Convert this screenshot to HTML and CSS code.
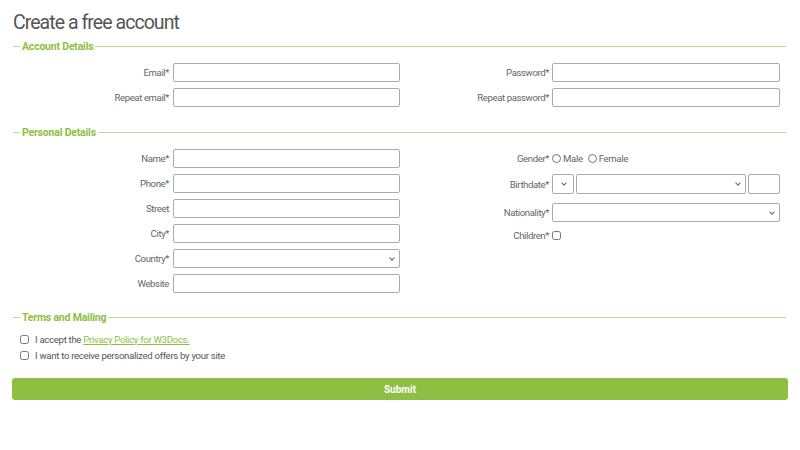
FILE: index.html
```html
<!DOCTYPE html>
<html lang="en">
<head>
<meta charset="utf-8">
<title>Create a free account</title>
<link rel="stylesheet" href="styles.css">
</head>
<body>
<form class="page">
  <h1 class="title">Create a free account</h1>

  <fieldset class="group group-account">
    <legend class="legend">Account Details</legend>
    <div class="cols">
      <div class="col col-left">
        <div class="row"><label class="lbl">Email*</label><input class="field" type="text"></div>
        <div class="row"><label class="lbl">Repeat email*</label><input class="field" type="text"></div>
      </div>
      <div class="col col-right">
        <div class="row"><label class="lbl">Password*</label><input class="field" type="password"></div>
        <div class="row"><label class="lbl">Repeat password*</label><input class="field" type="password"></div>
      </div>
    </div>
  </fieldset>

  <fieldset class="group group-personal">
    <legend class="legend">Personal Details</legend>
    <div class="cols">
      <div class="col col-left">
        <div class="row"><label class="lbl">Name*</label><input class="field" type="text"></div>
        <div class="row"><label class="lbl">Phone*</label><input class="field" type="text"></div>
        <div class="row"><label class="lbl">Street</label><input class="field" type="text"></div>
        <div class="row"><label class="lbl">City*</label><input class="field" type="text"></div>
        <div class="row"><label class="lbl">Country*</label><span class="selwrap w-full"><select class="field sel"><option></option></select></span></div>
        <div class="row"><label class="lbl">Website</label><input class="field" type="text"></div>
      </div>
      <div class="col col-right">
        <div class="row row-gender">
          <label class="lbl">Gender*</label>
          <span class="choices">
            <label class="choice"><input class="radio" type="radio" name="g">Male</label>
            <label class="choice"><input class="radio" type="radio" name="g">Female</label>
          </span>
        </div>
        <div class="row row-birth">
          <label class="lbl">Birthdate*</label>
          <span class="birth">
            <span class="selwrap w-day"><select class="field sel"><option></option></select></span>
            <span class="selwrap w-month"><select class="field sel"><option></option></select></span>
            <input class="field in-year" type="text">
          </span>
        </div>
        <div class="row row-nat"><label class="lbl">Nationality*</label><span class="selwrap w-full"><select class="field sel"><option></option></select></span></div>
        <div class="row row-children"><label class="lbl">Children*</label><input class="check" type="checkbox"></div>
      </div>
    </div>
  </fieldset>

  <fieldset class="group group-terms">
    <legend class="legend">Terms and Mailing</legend>
    <label class="term"><input class="check" type="checkbox">I accept the <a class="link" href="#">Privacy Policy for W3Docs.</a></label>
    <label class="term"><input class="check" type="checkbox">I want to receive personalized offers by your site</label>
  </fieldset>

  <button class="submit" type="button">Submit</button>
</form>
</body>
</html>
```

FILE: styles.css
```css
* { box-sizing: border-box; }

body {
  margin: 0;
  background: #fff;
  font-family: Roboto, "Liberation Sans", Arial, sans-serif;
  color: #666;
}

.page {
  display: block;
  padding: 0 12px;
}

.title {
  margin: 11px 0 0 1px;
  font-size: 19.5px;
  line-height: 24px;
  font-weight: 400;
  letter-spacing: -0.95px;
  color: #555;
}

.group {
  margin: 5px 2px 0 1px;
  padding: 0;
  border: none;
  border-top: 1px solid #c0d79a;
  min-width: 0;
}

.legend {
  margin-left: 7px;
  padding: 0 2px;
  font-size: 10.5px;
  line-height: 13px;
  font-weight: 700;
  letter-spacing: -0.2px;
  color: #8ebf42;
}

.group-account { margin-top: 5px; }
.group-personal { margin-top: 19px; }
.group-terms { margin-top: 18px; }

.cols {
  display: flex;
  padding-top: 10px;
}

.col {
  display: flex;
  flex-direction: column;
  gap: 6px;
}

.col-left { width: 387px; }
.col-right { flex: 1; }

.row {
  display: flex;
  align-items: center;
  height: 19px;
  gap: 4px;
}

.col-right .row { gap: 3px; }

.lbl {
  flex: none;
  width: 156px;
  text-align: right;
  font-size: 9.6px;
  letter-spacing: -0.4px;
  color: #666;
}

.col-right .lbl { width: 149px; }

.field {
  display: block;
  width: 227px;
  height: 19px;
  margin: 0;
  padding: 0 3px;
  border: 1px solid #ababab;
  border-radius: 2px;
  background: #fff;
  font-family: inherit;
  font-size: 9px;
  color: #555;
}

.col-right .field { width: 228px; }

.sel {
  appearance: none;
  -webkit-appearance: none;
}

.selwrap {
  position: relative;
  display: block;
}

.selwrap::after {
  content: "";
  position: absolute;
  top: 7px;
  right: 6px;
  width: 3px;
  height: 3px;
  border-right: 1.3px solid #666;
  border-bottom: 1.3px solid #666;
  transform: rotate(45deg);
  pointer-events: none;
}

.selwrap .field { width: 100%; }

.w-full { width: 227px; }
.col-right .w-full { width: 228px; }
.w-day { width: 22px; }
.w-month { width: 170px; }

.w-day::after { right: 8px; }

.row-birth { height: 20px; }
.row-birth .field { height: 20px; }
.row-nat { margin-top: 3px; }
.row-children { margin-top: -2px; }

.birth {
  display: flex;
  gap: 2px;
}

.col-right .birth .in-year { width: 32px; }

.choices {
  display: flex;
  gap: 5px;
  font-size: 9.6px;
  letter-spacing: -0.35px;
  color: #666;
}

.choice {
  display: flex;
  align-items: center;
  gap: 2px;
}

.radio {
  width: 9px;
  height: 9px;
  margin: 0;
}

.check {
  width: 9px;
  height: 9px;
  margin: 0;
}

.group-terms {
  padding-top: 7px;
}

.term {
  display: flex;
  align-items: center;
  height: 16px;
  padding-left: 7px;
  font-size: 9.6px;
  letter-spacing: -0.3px;
  color: #555;
  white-space: pre;
}

.term .check { margin-right: 6px; }

.link {
  color: #8ebf42;
  text-decoration: underline;
}

.submit {
  display: block;
  width: 776px;
  height: 22px;
  margin-top: 15px;
  border: none;
  border-radius: 3px;
  background: #8ebf42;
  color: #fff;
  font-family: inherit;
  font-size: 10px;
  font-weight: 700;
}
```
